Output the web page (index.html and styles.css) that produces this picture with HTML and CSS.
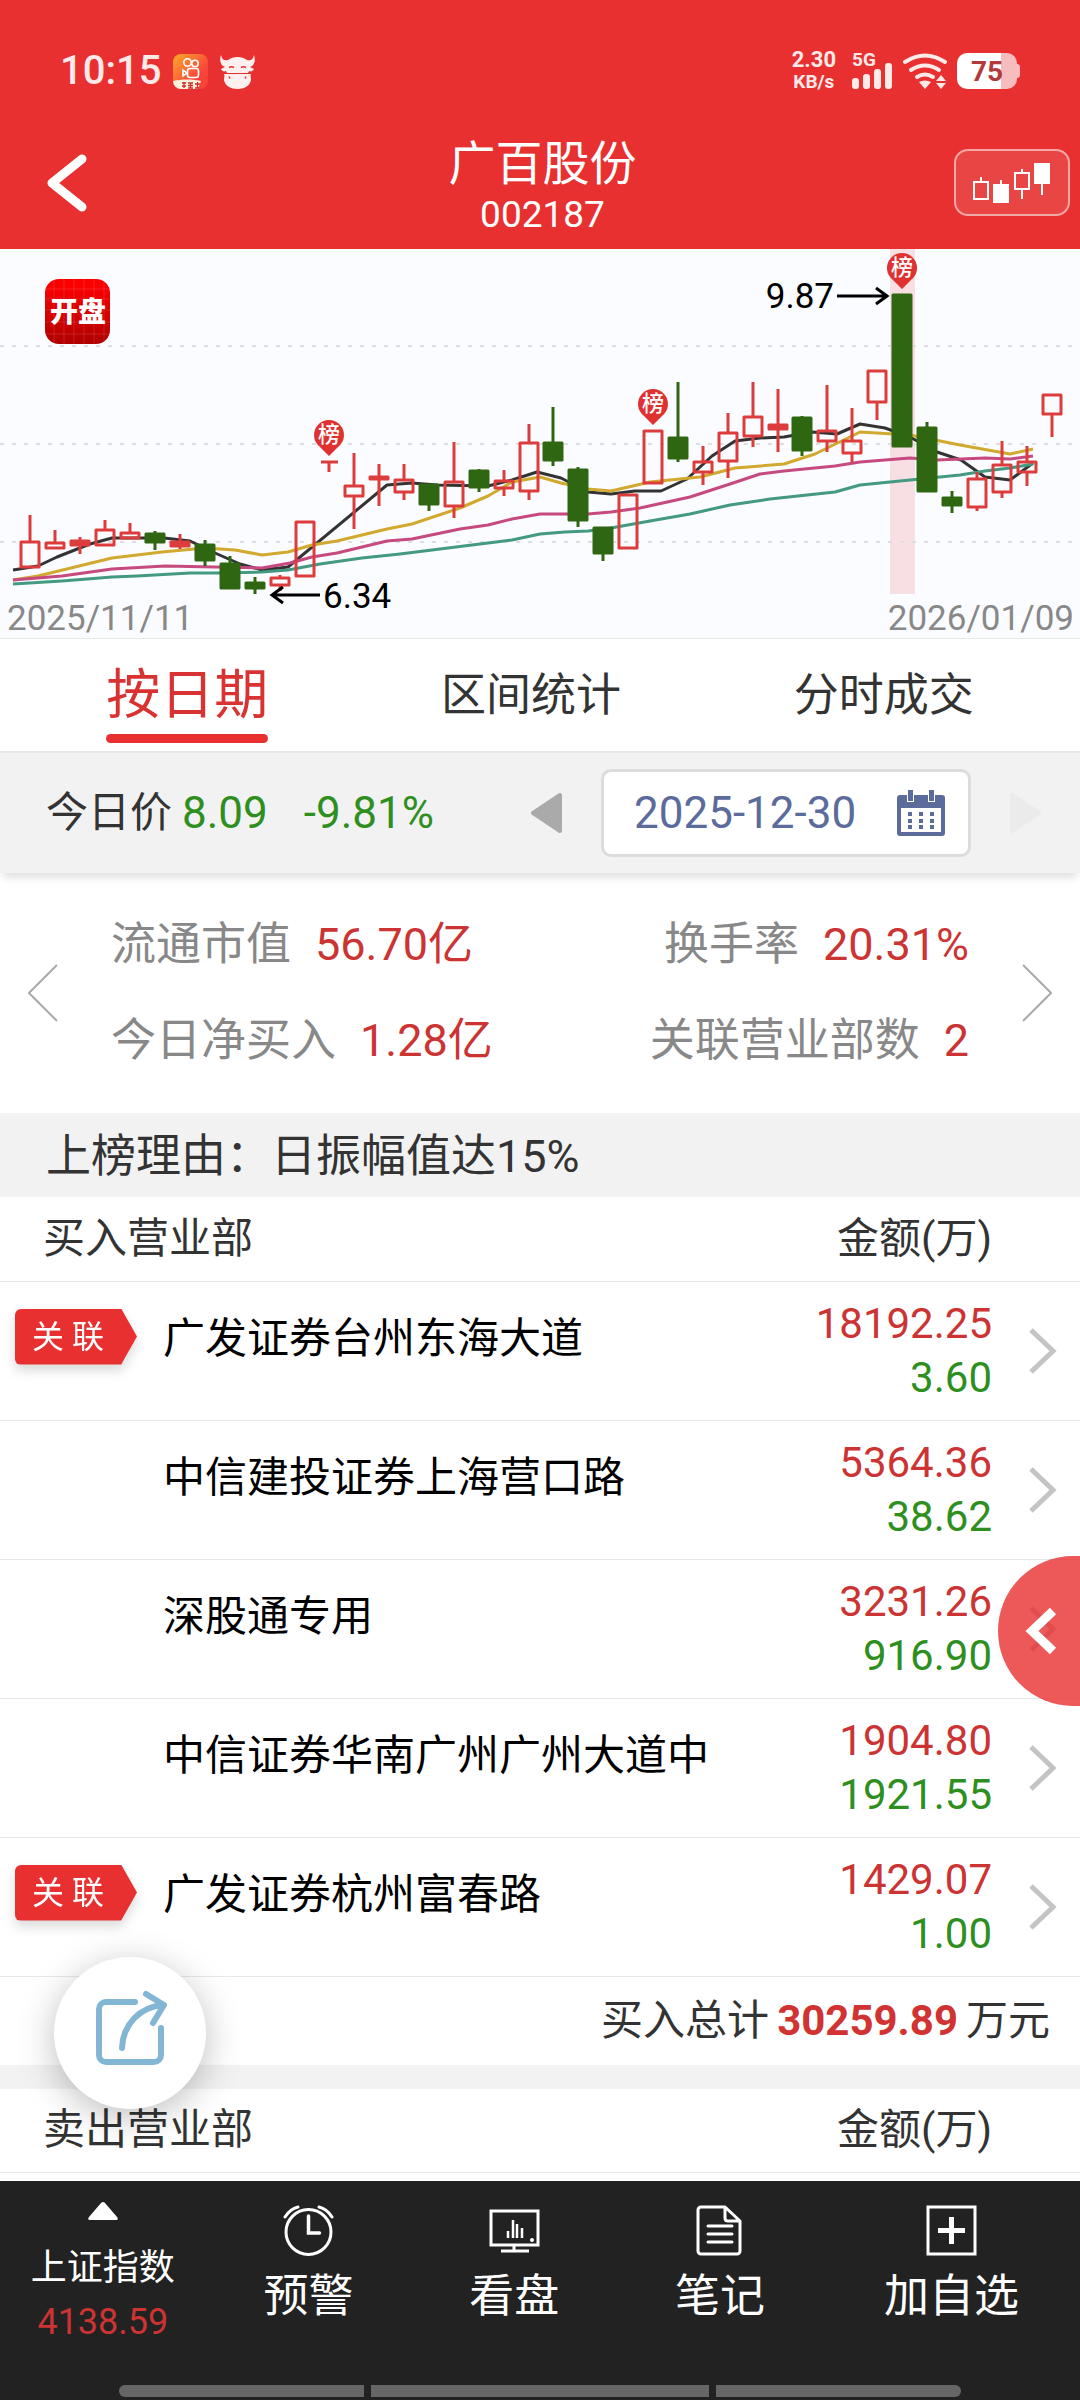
FILE: index.html
```
<!DOCTYPE html>
<html lang="zh-CN">
<head>
    <meta charset="UTF-8">
    <meta name="viewport" content="width=device-width, initial-scale=1.0">
    <title>广百股份 002187</title>
    <link rel="stylesheet" href="styles.css">
</head>
<body>
    <div class="page">
        <header class="header">
            <div class="status-bar">
                <span class="time">10:15</span>
                <svg class="status-app" width="35" height="35" viewBox="0 0 35 35">
                    <defs>
                        <linearGradient id="appBg" x1="0" y1="0" x2="1" y2="1">
                            <stop offset="0" stop-color="#ffa92b"/>
                            <stop offset="0.7" stop-color="#f9423a"/>
                        </linearGradient>
                    </defs>
                    <rect width="35" height="35" rx="8" fill="url(#appBg)"/>
                    <g fill="none" stroke="#fff" stroke-width="1.6">
                        <circle cx="14.500" cy="8.500" r="3.700"/>
                        <circle cx="22" cy="9.500" r="3.200"/>
                        <rect x="14.500" y="14.500" width="11" height="9" rx="2.500"/>
                        <path d="M14 19l-4-3v6z"/>
                    </g>
                    <path d="M0 27c9-2 20-2 28 0l-3 8H8a8 8 0 0 1-8-8z" fill="#fff0dc"/>
                    <path d="M9 29h4M11 28v6M9 32h4M15 29h5M15 31.500h5M15 34h5M17.500 29v5M22 30h5M24.500 28v6M22 34h4" stroke="#c8322c" stroke-width="1.300"/>
                </svg>
                <svg width="35" height="35" viewBox="0 0 35 35" fill="#fff0f0">
                    <path d="M1 1c1 5 4 6 7 5 5-4 14-4 19 0 3 1 6 0 7-5 2 6 0 11-4 12l4 2c-1 2-3 3-5 2l-1 2H7l-1-2c-2 1-4 0-5-2l4-2C1 12-1 7 1 1z"/>
                    <path d="M4 20h27c-1 2 0 3 0 6-1 6-7 9-13.500 9S5 32 4 26c0-3 1-4 0-6z"/>
                    <path d="M9 13.500q2.500-1.500 5 0M21 13.500q2.500-1.500 5 0M9 22.500l1 2M26 22.500l-1 2" fill="none" stroke="#e83030" stroke-width="1.500"/>
                </svg>
                <span class="net-speed">2.30<small>KB/s</small></span>
                <div class="signal">
                    <span>5G</span>
                    <svg width="41" height="26" viewBox="0 0 41 26" fill="#ffe9e9">
                        <rect x="0" y="15" width="7" height="11" rx="3"/>
                        <rect x="11" y="11" width="7" height="15" rx="3"/>
                        <rect x="22" y="6" width="7" height="20" rx="3"/>
                        <rect x="33" y="0" width="7" height="26" rx="3"/>
                    </svg>
                </div>
                <svg width="44" height="36" viewBox="0 0 44 36">
                    <g fill="none" stroke="#ffe9e9" stroke-width="4" stroke-linecap="round">
                        <path d="M2 9q20-13 40 0"/>
                        <path d="M8 17q14-9 28 0"/>
                        <path d="M14 24q8-5 16 0"/>
                    </g>
                    <path d="M16 29q6-3 12 0l-6 7zM33 28l5-6 5 6zM33 30h10l-5 6z" fill="#ffe9e9"/>
                </svg>
                <div class="battery"><span>75</span></div>
            </div>
            <div class="title-bar">
                <button class="back-btn" aria-label="返回">
                    <svg width="40" height="60" viewBox="0 0 40 60" fill="none" stroke="#fff" stroke-width="9" stroke-linecap="round" stroke-linejoin="round">
                        <path d="M35 6L5 30l30 24"/>
                    </svg>
                </button>
                <div class="title">
                    <h1>广百股份</h1>
                    <p>002187</p>
                </div>
                <button class="kline-btn" aria-label="K线">
                    <svg width="78" height="40" viewBox="0 0 78 40" fill="none" stroke="#fff" stroke-width="2">
                        <path d="M1 19h14v17H1zM8 19v-5"/>
                        <path d="M21 22h14v17H21zM28 22v-5" fill="#fff"/>
                        <path d="M42 10h14v16H42zM49 10V6M49 26v10"/>
                        <path d="M62 1h14v19H62zM69 20v12" fill="#fff"/>
                    </svg>
                </button>
            </div>
        </header>

        <svg class="chart" viewBox="0 0 1080 389">
            <defs>
                <linearGradient id="logoBg" x1="0" y1="0" x2="0" y2="1">
                    <stop offset="0.1" stop-color="#fb0000"/>
                    <stop offset="1" stop-color="#b00000"/>
                </linearGradient>
                <g id="pin">
                    <path d="M0 22L-9 13A15 15 0 1 1 9 13z" fill="#e03131"/>
                    <text x="0" y="8" class="pin-text">榜</text>
                </g>
            </defs>
            <rect x="890" y="0" width="25" height="345" fill="#f8dfe4"/>
            <path class="grid-line" d="M0 97H1080M0 195H1080M0 293H1080"/>

            <!-- moving averages -->
            <g class="ma">
                <polyline stroke="#333" points="13,321 38,317 57,308 90,295 112,289 164,289 190,292 215,304 240,315 262,321 288,318 387,236 412,234 437,236 488,237 512,231 537,223 561,229 588,243 611,245 635,242 661,242 687,230 712,207 735,192 760,189 784,188 812,183 837,185 860,175 885,179 910,188 937,203 961,211 985,228 1010,231 1033,214"/>
                <polyline stroke="#d1a92e" points="13,331 38,327 112,309 162,303 205,299 235,301 262,306 288,303 312,296 337,292 387,280 412,275 460,259 488,247 512,233 540,228 561,234 588,240 611,242 650,233 700,228 735,219 784,215 815,205 860,183 910,186 960,196 1010,205 1033,200"/>
                <polyline stroke="#c64a80" points="13,331 62,327 112,320 165,317 215,318 262,319 290,314 312,308 337,304 362,298 387,292 412,290 460,280 488,276 512,270 540,265 588,265 611,263 640,259 690,248 730,235 760,225 784,222 835,217 860,213 910,209 937,211 985,209 1010,210 1033,207"/>
                <polyline stroke="#439a80" points="13,335 62,332 112,328 137,327 190,324 220,324 262,323 288,321 320,315 362,309 400,305 440,300 488,294 512,291 540,285 565,283 588,282 611,279 650,272 690,265 730,256 770,250 835,243 860,236 910,231 960,226 985,222 1010,219 1033,215"/>
            </g>

            <!-- rising candles -->
            <path class="candle-up" d="M30 266V293M21 293h18v25h-18z
                M55 281V294M46 294h18v5h-18z
                M80 288V305M71 292h18v4h-18zM71 294h18
                M105 271V281M96 281h18v15h-18z
                M130 274V283M121 284h18v5h-18z
                M180 285V300M171 293h18v4h-18zM171 295h18
                M280 326V329M280 336V342M271 329h18v7h-18z
                M305 273M296 273h18v54h-18z
                M321 213h17M329 213V223
                M354 204V237M354 247V280M345 237h18v10h-18z
                M379 215V257M370 228h18v2h-18z
                M404 215V231M404 243V251M395 231h18v12h-18z
                M454 193V233M454 257V269M445 233h18v24h-18z
                M504 221V232M504 239V247M495 232h18v7h-18z
                M529 175V194M529 242V251M520 194h18v48h-18z
                M619 246h18v53h-18z
                M644 182h18v52h-18z
                M703 197V213M703 223V236M694 213h18v10h-18z
                M728 164V184M728 212V229M719 184h18v28h-18z
                M753 133V168M753 187V198M744 168h18v19h-18z
                M778 140V203M769 176h18v4h-18zM769 178h18
                M827 136V182M827 192V203M818 182h18v10h-18z
                M852 159V192M852 204V213M843 192h18v12h-18z
                M877 153V171M868 122h18v31h-18z
                M977 223V230M977 258V262M968 230h18v28h-18z
                M1002 192V216M1002 243V249M993 216h18v27h-18z
                M1027 197V213M1027 223V237M1018 213h18v10h-18z
                M1052 165V188M1043 146h18v19h-18z"/>

            <!-- falling candles -->
            <path class="candle-down" d="M155 282V301M146 285h18v8h-18z
                M205 291V317M196 296h18v15h-18z
                M230 307V340M221 315h18v24h-18z
                M255 328V345M246 334h18v5h-18z
                M429 235V262M420 236h18v19h-18z
                M479 220V243M470 222h18v16h-18z
                M553 158V217M544 194h18v17h-18z
                M578 218V278M569 221h18v50h-18z
                M603 278V312M594 279h18v25h-18z
                M678 133V213M669 189h18v20h-18z
                M802 167V207M793 169h18v32h-18z
                M893 46h18v151h-18z
                M927 173V243M918 179h18v63h-18z
                M952 242V264M943 249h18v7h-18z"/>

            <use href="#pin" x="329" y="185"/>
            <use href="#pin" x="653" y="154"/>
            <use href="#pin" x="902" y="18"/>

            <g class="arrow">
                <path d="M837 47h49M876 39l11 8-11 8"/>
                <path d="M320 346h-48M283 338l-11 8 11 8"/>
            </g>
            <text class="price-text" x="834" y="59" text-anchor="end">9.87</text>
            <text class="price-text" x="323" y="359">6.34</text>
            <text class="date-text" x="7" y="381">2025/11/11</text>
            <text class="date-text" x="1074" y="381" text-anchor="end">2026/01/09</text>

            <rect x="45" y="30" width="65" height="65" rx="14" fill="url(#logoBg)"/>
            <path d="M54 30v65M64 30v65M74 30v65M84 30v65M94 30v65M104 30v65M45 40h65M45 50h65M45 61h65M45 73h65M45 85h65" stroke="#fff" stroke-opacity="0.120"/>
            <text class="logo-text" x="78" y="73">开盘</text>
        </svg>

        <nav class="tabs">
            <button class="tab active">按日期</button>
            <button class="tab">区间统计</button>
            <button class="tab">分时成交</button>
        </nav>

        <section class="date-bar">
            <span class="price-label">今日价</span>
            <span class="down">8.09</span>
            <span class="down change">-9.81%</span>
            <button class="day-btn prev" aria-label="前一天">
                <svg width="32" height="42" viewBox="0 0 32 42" fill="#aaa" stroke="#aaa" stroke-width="4" stroke-linejoin="round">
                    <path d="M2 21L29 3v36z"/>
                </svg>
            </button>
            <button class="date-picker">
                2025-12-30
                <svg width="48" height="46" viewBox="0 0 48 46">
                    <path d="M3 5H45a3 3 0 0 1 3 3V43a3 3 0 0 1-3 3H3a3 3 0 0 1-3-3V8a3 3 0 0 1 3-3z" fill="#5b6b9b"/>
                    <path d="M4 18h40v24H4z" fill="#fff"/>
                    <path d="M10 0h7v12h-7zM31 0h7v12h-7z" fill="#fff"/>
                    <path d="M11 0h5v11h-5zM32 0h5v11h-5z" fill="#5b6b9b"/>
                    <path d="M11 24h4M22 24h4M33 24h4M11 31h4M22 31h4M33 31h4M11 37h4M22 37h4M33 37h4" stroke="#5b6b9b" stroke-width="4"/>
                </svg>
            </button>
            <button class="day-btn" aria-label="后一天" disabled>
                <svg width="32" height="42" viewBox="0 0 32 42" fill="#ebebeb" stroke="#ebebeb" stroke-width="4" stroke-linejoin="round">
                    <path d="M30 21L3 3v36z"/>
                </svg>
            </button>
        </section>

        <section class="summary">
            <button class="slide-btn" aria-label="上一页">
                <svg width="30" height="58" viewBox="0 0 30 58" fill="none" stroke="#aaa" stroke-width="2"><path d="M29 1L1 29l28 28"/></svg>
            </button>
            <dl class="stats">
                <div><dt>流通市值</dt><dd>56.70亿</dd></div>
                <div><dt>换手率</dt><dd>20.31%</dd></div>
                <div><dt>今日净买入</dt><dd>1.28亿</dd></div>
                <div><dt>关联营业部数</dt><dd>2</dd></div>
            </dl>
            <button class="slide-btn" aria-label="下一页">
                <svg width="30" height="58" viewBox="0 0 30 58" fill="none" stroke="#aaa" stroke-width="2"><path d="M1 1l28 28L1 57"/></svg>
            </button>
        </section>

        <p class="reason">上榜理由：日振幅值达15%</p>

        <main class="list">
            <table class="seats">
                <thead>
                    <tr>
                        <th class="col-name" colspan="2">买入营业部</th>
                        <th class="col-amount">金额(万)</th>
                        <th class="col-more"></th>
                    </tr>
                </thead>
                <tbody>
                    <tr>
                        <td class="col-tag"><span class="tag"><b>关 联</b></span></td>
                        <td class="seat">广发证券台州东海大道</td>
                        <td class="amount"><span class="up">18192.25</span><span class="down">3.60</span></td>
                        <td class="more"><svg width="28" height="48" viewBox="0 0 28 48"><path d="M2 3l22 21L2 45"/></svg></td>
                    </tr>
                    <tr>
                        <td class="col-tag"></td>
                        <td class="seat">中信建投证券上海营口路</td>
                        <td class="amount"><span class="up">5364.36</span><span class="down">38.62</span></td>
                        <td class="more"><svg width="28" height="48" viewBox="0 0 28 48"><path d="M2 3l22 21L2 45"/></svg></td>
                    </tr>
                    <tr>
                        <td class="col-tag"></td>
                        <td class="seat">深股通专用</td>
                        <td class="amount"><span class="up">3231.26</span><span class="down">916.90</span></td>
                        <td class="more"><svg width="28" height="48" viewBox="0 0 28 48"><path d="M2 3l22 21L2 45"/></svg></td>
                    </tr>
                    <tr>
                        <td class="col-tag"></td>
                        <td class="seat">中信证券华南广州广州大道中</td>
                        <td class="amount"><span class="up">1904.80</span><span class="down">1921.55</span></td>
                        <td class="more"><svg width="28" height="48" viewBox="0 0 28 48"><path d="M2 3l22 21L2 45"/></svg></td>
                    </tr>
                    <tr>
                        <td class="col-tag"><span class="tag"><b>关 联</b></span></td>
                        <td class="seat">广发证券杭州富春路</td>
                        <td class="amount"><span class="up">1429.07</span><span class="down">1.00</span></td>
                        <td class="more"><svg width="28" height="48" viewBox="0 0 28 48"><path d="M2 3l22 21L2 45"/></svg></td>
                    </tr>
                </tbody>
            </table>
            <p class="total">买入总计<strong>30259.89</strong>万元</p>
            <table class="seats">
                <thead>
                    <tr>
                        <th class="col-name" colspan="2">卖出营业部</th>
                        <th class="col-amount">金额(万)</th>
                        <th class="col-more"></th>
                    </tr>
                </thead>
            </table>
        </main>

        <footer class="footer">
            <nav class="bottom-nav">
                <button class="nav-item index">
                    <svg width="30" height="18" viewBox="0 0 30 18" fill="#fff"><path d="M13 1q2-2 4 0l12 14q2 3-1 3H2q-3 0-1-3z"/></svg>
                    <span>上证指数</span>
                    <em>4138.59</em>
                </button>
                <button class="nav-item">
                    <svg width="51" height="51" viewBox="0 0 51 51" fill="none" stroke="#fff" stroke-width="3" stroke-linecap="round">
                        <circle cx="25.500" cy="27" r="22.500"/>
                        <path d="M25.500 11v17h11" stroke-width="3.500"/>
                        <path d="M2 12Q7 4 15 2M49 12Q44 4 36 2"/>
                    </svg>
                    预警
                </button>
                <button class="nav-item">
                    <svg width="51" height="51" viewBox="0 0 51 51" fill="none" stroke="#fff" stroke-width="3">
                        <path d="M2 6h47v34H2z"/>
                        <path d="M19 26v7M24 15v18M28 19v14M33 23v10" stroke-width="2.500"/>
                        <circle cx="43" cy="35" r="2" fill="#fff" stroke="none"/>
                        <path d="M25 40v6M12 46h28"/>
                    </svg>
                    看盘
                </button>
                <button class="nav-item">
                    <svg width="51" height="51" viewBox="0 0 51 51" fill="none" stroke="#fff" stroke-width="3" stroke-linecap="round" stroke-linejoin="round">
                        <path d="M7 2h24l15 14v30a3 3 0 0 1-3 3H7a3 3 0 0 1-3-3V5a3 3 0 0 1 3-3zM31 2v11q0 3 3 3h12"/>
                        <path d="M14 21h24M14 29h24M14 37h24"/>
                    </svg>
                    笔记
                </button>
                <button class="nav-item">
                    <svg width="51" height="51" viewBox="0 0 51 51" fill="none" stroke="#fff" stroke-width="3">
                        <path d="M2 2h47v47H2z"/>
                        <path d="M12 25.500h27M25.500 12v27" stroke-width="5"/>
                    </svg>
                    加自选
                </button>
            </nav>
            <div class="home-bar"><i></i><i></i><i></i></div>
        </footer>
    </div>

    <button class="share-btn" aria-label="分享">
        <svg width="76" height="76" viewBox="0 0 76 76" fill="none" stroke="#82b6d4" stroke-width="6" stroke-linecap="round" stroke-linejoin="round">
            <path d="M43 11H14a7 7 0 0 0-7 7v46a7 7 0 0 0 7 7h48a7 7 0 0 0 7-7V37"/>
            <path d="M30 57C31 33 48 16 71 14M54 3l18 11-11 18"/>
        </svg>
    </button>
    <button class="drawer-btn" aria-label="展开">
        <svg width="32" height="48" viewBox="0 0 32 48" fill="none" stroke="#fff" stroke-width="9"><path d="M28 4L7 24l21 20"/></svg>
    </button>
</body>
</html>
```
FILE: styles.css
```
* {
    box-sizing: border-box;
}
body {
    margin: 0;
    font-family: Roboto, "Noto Sans CJK SC", sans-serif;
    color: #333;
    background-color: #fff;
}
h1, p, dl, dd {
    margin: 0;
}
button {
    padding: 0;
    border: none;
    background: none;
    font-family: inherit;
    color: inherit;
    cursor: pointer;
}
svg {
    display: block;
    flex-shrink: 0;
}
.page {
    display: flex;
    flex-direction: column;
    min-height: 100vh;
}
.up {
    color: #cc3333;
}
.down {
    color: #2e8f1f;
}

/* header */
.header {
    background-color: #e83030;
    color: #fff;
    padding-bottom: 10px;
}
.status-bar {
    display: flex;
    align-items: center;
    height: 126px;
    padding: 16px 63px 0 60px;
    color: #ffe9e9;
}
.time {
    font-size: 40px;
    font-weight: 500;
    line-height: 40px;
}
.status-app {
    margin: 0 12px;
}
.net-speed {
    margin-left: auto;
    margin-right: 16px;
    font-size: 22px;
    font-weight: 700;
    line-height: 22px;
    text-align: center;
}
.net-speed small {
    display: block;
    font-size: 19px;
}
.signal {
    position: relative;
    display: flex;
    align-items: flex-end;
    height: 36px;
    margin-right: 10px;
}
.signal span {
    position: absolute;
    top: -4px;
    left: 0;
    font-size: 19px;
    font-weight: 700;
    line-height: 22px;
}
.battery {
    position: relative;
    width: 60px;
    height: 36px;
    margin-left: 10px;
    border-radius: 10px;
    background: linear-gradient(to right, #fff 74%, #f7bcbd 74%);
    color: #b23a3c;
    font-size: 28px;
    font-weight: 700;
    line-height: 37px;
    text-align: center;
}
.battery::after {
    content: "";
    position: absolute;
    top: 11px;
    right: -3px;
    width: 3px;
    height: 14px;
    border-radius: 0 3px 3px 0;
    background-color: #f7bcbd;
}
.title-bar {
    display: grid;
    grid-template-columns: 1fr auto 1fr;
    align-items: center;
    padding: 0 10px 0 47px;
    height: 113px;
}
.title {
    padding-top: 4px;
    padding-right: 32px;
    text-align: center;
}
.title h1 {
    font-size: 47px;
    font-weight: 400;
    line-height: 60px;
}
.title p {
    font-size: 37px;
    line-height: 42px;
}
.back-btn {
    justify-self: start;
}
.kline-btn {
    display: flex;
    justify-content: center;
    align-items: center;
    justify-self: end;
    width: 116px;
    height: 67px;
    border: 2px solid #f5a8a8;
    border-radius: 14px;
    background-color: #ea4545;
}

/* chart */
.chart {
    width: 100%;
    height: auto;
    background-color: #fbfcff;
    border-bottom: 1px solid #e8e8e8;
}
.grid-line {
    stroke: #dedee2;
    stroke-width: 2;
    stroke-dasharray: 4 8;
}
.ma {
    fill: none;
    stroke-width: 3;
    stroke-linejoin: round;
}
.candle-up {
    fill: none;
    stroke: #dc3c3c;
    stroke-width: 3;
    stroke-linejoin: round;
}
.candle-down {
    fill: #2f6612;
    stroke: #2f6612;
    stroke-width: 3;
    stroke-linejoin: round;
}
.pin-text {
    fill: #fff;
    font-size: 22px;
    font-weight: 500;
    text-anchor: middle;
}
.arrow {
    fill: none;
    stroke: #000;
    stroke-width: 3;
}
.price-text {
    fill: #000;
    font-size: 35px;
}
.date-text {
    fill: #888;
    font-size: 35px;
}
.logo-text {
    fill: #fff;
    font-size: 28px;
    font-weight: 900;
    text-anchor: middle;
}

/* tabs */
.tabs {
    display: flex;
    justify-content: space-around;
    height: 112px;
    padding: 0 20px;
}
.tab {
    font-size: 45px;
    line-height: 114px;
}
.tab.active {
    position: relative;
    font-size: 54px;
    color: #d93232;
}
.tab.active::after {
    content: "";
    position: absolute;
    left: 0;
    right: 0;
    bottom: 8px;
    height: 9px;
    border-radius: 5px;
    background-color: #e83030;
}

/* date bar */
.date-bar {
    display: flex;
    align-items: center;
    height: 122px;
    padding: 0 39px 0 46px;
    border-top: 2px solid #e8e8e8;
    background-color: #f2f2f2;
    box-shadow: 0 8px 8px -3px rgba(0,0,0,0.12);
    font-size: 44px;
    line-height: 60px;
}
.price-label {
    margin-right: 10px;
    font-size: 42px;
}
.change {
    margin-left: 36px;
}
.day-btn.prev {
    margin-left: auto;
}
.date-picker {
    display: flex;
    justify-content: space-between;
    align-items: center;
    width: 370px;
    height: 88px;
    margin: 0 38px;
    padding: 0 23px 0 30px;
    border: 3px solid #dcdcdc;
    border-radius: 10px;
    background-color: #fff;
    color: #5b6b9b;
    font-size: 44px;
}

/* summary */
.summary {
    display: flex;
    align-items: center;
    justify-content: space-between;
    height: 240px;
    padding: 0 28px;
}
.stats {
    display: grid;
    flex: 1;
    grid-template-columns: 1fr 1fr;
    padding: 0 53px;
}
.stats div {
    display: flex;
    gap: 24px;
    font-size: 45px;
    line-height: 96px;
    white-space: nowrap;
}
.stats div:nth-child(even) {
    justify-content: flex-end;
}
.stats dt {
    color: #888;
}
.stats dd {
    color: #cc3333;
}
.reason {
    height: 84px;
    padding: 0 46px;
    background-color: #f2f2f2;
    font-size: 45px;
    line-height: 88px;
}

/* seats */
.list {
    flex: 1;
}
.seats {
    width: 100%;
    border-collapse: collapse;
}
.seats tr {
    border-bottom: 1px solid #e8e8e8;
}
.seats th {
    height: 84px;
    padding: 0;
    font-size: 42px;
    font-weight: 400;
    line-height: 60px;
}
.seats td {
    height: 139px;
    padding: 0;
}
.seats .col-name {
    padding-left: 43px;
    text-align: left;
}
.seats .col-amount {
    text-align: right;
}
.col-more {
    width: 88px;
}
.seats .col-tag {
    width: 163px;
    padding: 27px 0 0 15px;
    vertical-align: top;
}
.tag {
    display: block;
    width: 122px;
    filter: drop-shadow(0 6px 6px rgba(0,0,0,0.15));
}
.tag b {
    display: block;
    padding-left: 17px;
    border-radius: 6px 0 0 6px;
    background-color: #e83030;
    clip-path: polygon(0 0, 87% 0, 100% 50%, 87% 100%, 0 100%);
    color: #fff;
    font-size: 32px;
    font-weight: 400;
    line-height: 56px;
}
.seats .seat {
    padding-top: 27px;
    color: #000;
    font-size: 42px;
    line-height: 60px;
    vertical-align: top;
}
.amount {
    font-size: 42px;
    line-height: 54px;
    text-align: right;
}
.amount span {
    display: block;
}
.seats .more {
    padding-left: 37px;
}
.more path {
    fill: none;
    stroke: #c4c4c4;
    stroke-width: 5;
}
.total {
    padding-right: 30px;
    border-bottom: 24px solid #f2f2f2;
    font-size: 42px;
    line-height: 88px;
    text-align: right;
}
.total strong {
    margin: 0 8px;
    color: #d13232;
    font-size: 42px;
}

/* footer */
.footer {
    height: 219px;
    background-color: #222;
    color: #fff;
}
.bottom-nav {
    display: grid;
    grid-template-columns: repeat(4, 4fr) 5fr;
    height: 204px;
}
.nav-item {
    display: flex;
    flex-direction: column;
    align-items: center;
    padding-top: 24px;
    font-size: 45px;
    line-height: 82px;
}
.nav-item.index {
    padding-top: 21px;
    font-size: 36px;
    line-height: 54px;
}
.index span {
    margin-top: 21px;
}
.index em {
    color: #cc3333;
    font-style: normal;
}
.home-bar {
    display: flex;
    justify-content: center;
    gap: 7px;
}
.home-bar i {
    width: 245px;
    height: 12px;
    background-color: #666;
}
.home-bar i:first-child {
    border-radius: 6px 0 0 6px;
}
.home-bar i:nth-child(2) {
    width: 338px;
}
.home-bar i:last-child {
    border-radius: 0 6px 6px 0;
}

/* floating buttons */
.share-btn {
    position: fixed;
    left: 54px;
    bottom: 291px;
    display: flex;
    justify-content: center;
    align-items: center;
    width: 152px;
    height: 152px;
    padding-bottom: 8px;
    border-radius: 50%;
    background-color: #fff;
    box-shadow: 0 8px 36px rgba(0,0,0,0.25);
}
.drawer-btn {
    position: fixed;
    right: 0;
    bottom: 694px;
    display: flex;
    align-items: center;
    width: 82px;
    height: 150px;
    padding-left: 27px;
    border-radius: 75px 0 0 75px;
    background-color: rgba(232,48,48,0.8);
}
```
